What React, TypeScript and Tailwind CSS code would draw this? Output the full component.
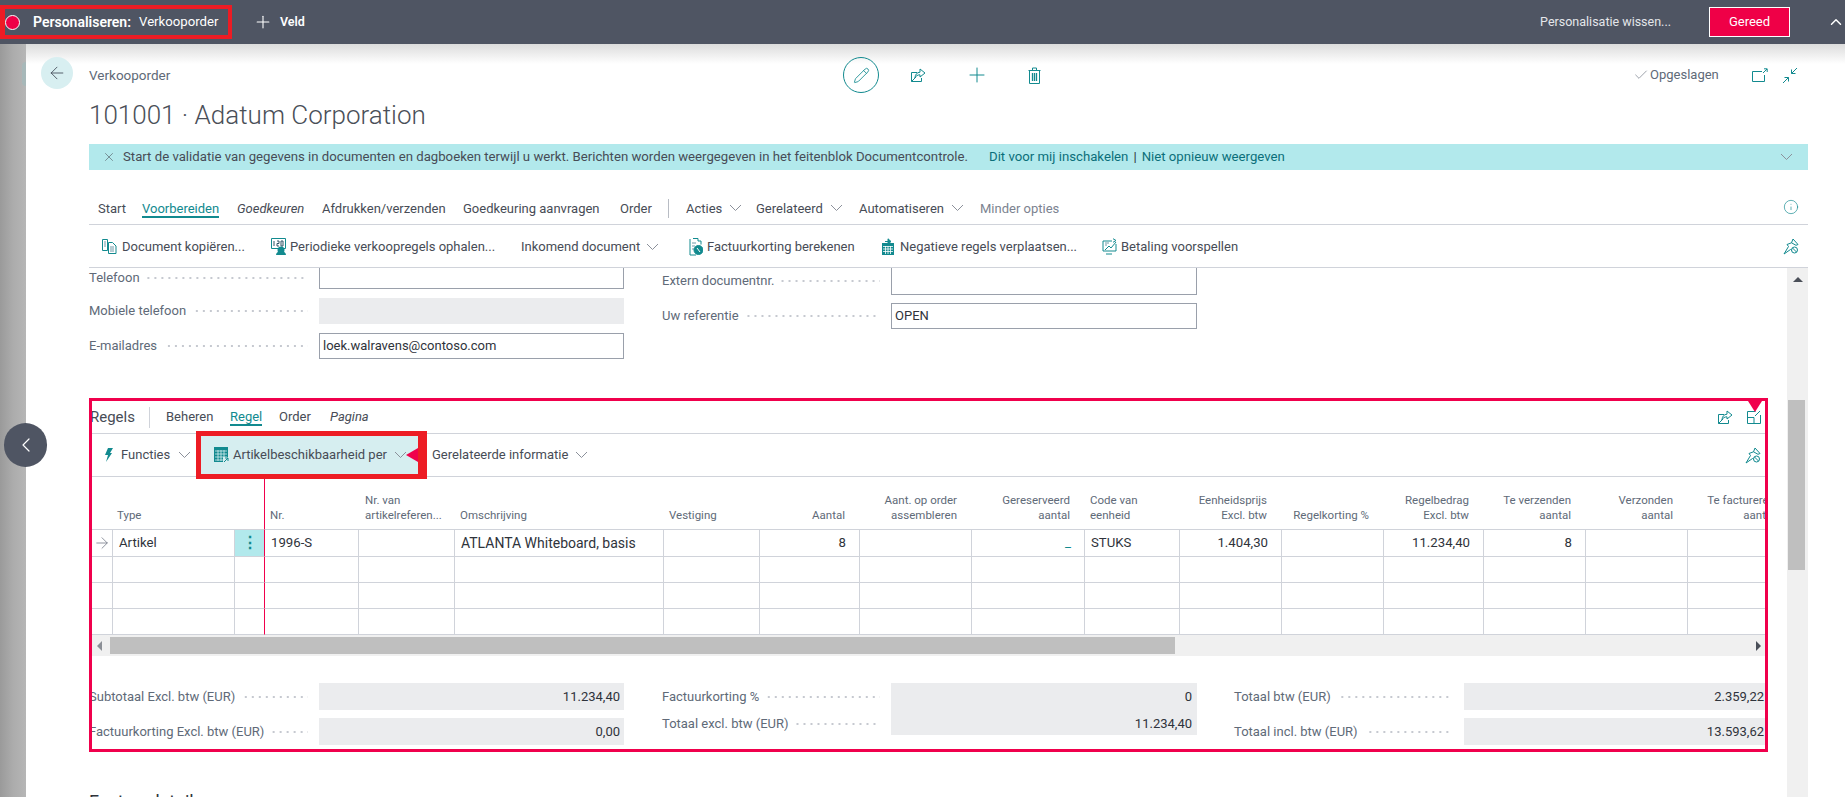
import { ArrowLeft, ArrowRight, Check, ChevronLeft, ChevronUp, Info, Pencil, Plus, X } from 'lucide-react'

const teal = '#128a8f'

function Chev({ className = '' }: { className?: string }) {
  return (
    <svg width="13" height="8" viewBox="0 0 13 8" fill="none" stroke="#8b909a" className={`shrink-0 ${className}`}>
      <path d="M1 1l5.500 5.500L12 1" />
    </svg>
  )
}

function ShareIcon() {
  return (
    <svg width="16" height="15" viewBox="0 0 16 15" fill="none" stroke={teal} className="shrink-0">
      <path d="M7 4.500H1.500v9h10V10M1.500 13.500L6 9" />
      <path d="M10 1l5 4-5 4V6.800C7.500 6.800 5.800 8 5 10c0-3.500 2-5.600 5-5.800z" />
    </svg>
  )
}

function TrashIcon() {
  return (
    <svg width="13" height="17" viewBox="0 0 13 17" fill="none" stroke={teal} className="shrink-0">
      <path d="M1.500 3.500h10v13h-10zM.5 3.500h12M4.500 3V1h4v2" />
      <path d="M4.500 6v8M6.500 6v8M8.500 6v8" strokeWidth="1.300" />
    </svg>
  )
}

function PopOutIcon() {
  return (
    <svg width="16" height="14" viewBox="0 0 16 14" fill="none" stroke={teal} className="shrink-0">
      <path d="M10 3.500H.5v10h12V7M11 5l4-4M12 .8h3.200V4" />
    </svg>
  )
}

function CollapseIcon() {
  return (
    <svg width="16" height="17" viewBox="0 0 16 17" fill="none" stroke={teal} className="shrink-0">
      <path d="M15 1L9.500 6.500M9.500 2.500v4h4M1 16l5.500-5.500M2.500 10.500h4v4" />
    </svg>
  )
}

function PinIcon() {
  return (
    <svg width="16" height="17" viewBox="0 0 16 17" fill="none" stroke={teal} className="shrink-0">
      <path d="M10 1l5 5.500-2 .8L8.500 4.800 10 1zM8.500 4.800L4 6.500l1.500 2L1 16l6.500-4.500 1 1" />
      <circle cx="11.500" cy="12" r="3" />
      <path d="M9.500 10l4 4" />
    </svg>
  )
}

function CopyDocIcon() {
  return (
    <svg width="15" height="15" viewBox="0 0 15 15" fill="none" stroke={teal} className="shrink-0">
      <path d="M.5.500h5v11h-5zM6.500 3.500h4l3.500 3.500v7.500H6.500z" />
      <path d="M2 3h2M2 5h2M2 7h2M8 8h4M8 10h4M8 12h4" stroke="#6f9aa8" />
    </svg>
  )
}

function RecurringIcon() {
  return (
    <svg width="15" height="17" viewBox="0 0 15 17" className="shrink-0">
      <path d="M.5.500h14v10H.5z" fill="#fff" stroke={teal} />
      <path d="M3 3v5M6 3h2v2.500H6V8h2M10 3h2v5h-2z" stroke="#356" fill="none" />
      <circle cx="10" cy="12" r="3.500" fill={teal} />
      <path d="M5 17c0-2.500 2-3.500 5-3.500s5 1 5 3.500z" fill={teal} />
    </svg>
  )
}

function DiscountDocIcon() {
  return (
    <svg width="14" height="18" viewBox="0 0 14 18" fill="none" stroke={teal} className="shrink-0">
      <path d="M4 .5h5V3h3v3.500M1 1v16h6" />
      <path d="M3 5h4M3 8h3M3 11h2" stroke="#6f9aa8" />
      <circle cx="9.500" cy="12" r="4.500" fill={teal} />
      <path d="M8 10l3 4" stroke="#fff" />
    </svg>
  )
}

function CalendarMoveIcon() {
  return (
    <svg width="12" height="17" viewBox="0 0 12 17" className="shrink-0">
      <path d="M0 5h12v12H0z" fill={teal} />
      <path d="M1 8.500h10M1 11h10M1 13.500h10M3.500 8v8M6 8v8M8.500 8v8" stroke="#fff" strokeWidth=".8" />
      <path d="M3 3.500h4M6 .8l3 2.700-3 2.700z" fill={teal} stroke={teal} />
    </svg>
  )
}

function ForecastIcon() {
  return (
    <svg width="15" height="17" viewBox="0 0 15 17" fill="none" stroke={teal} className="shrink-0">
      <path d="M10 3H1v10h13V6" />
      <path d="M3 12L7 8l2 2 5-6M4 16h6M11 .7l3 1.800-3 1.800" />
      <path d="M3 5h4M3 7h2" stroke="#6f9aa8" />
    </svg>
  )
}

function BoltIcon() {
  return (
    <svg width="8" height="14" viewBox="0 0 8 14" className="shrink-0">
      <path d="M3 0h5L5 5h2L1 14l2-7H0z" fill={teal} />
    </svg>
  )
}

function GridIcon() {
  return (
    <svg width="15" height="16" viewBox="0 0 15 16" className="shrink-0">
      <path d="M0 0h14v15H0z" fill={teal} />
      <path d="M1 4h12M1 7h12M1 10h12M1 13h12M4 3v11M7 3v11M10 3v11" stroke="#d6eef0" strokeWidth=".8" />
      <path d="M9 10h6v6H9z" fill="#d6eef0" />
      <path d="M10 15l4-4M11 11h3v3" stroke={teal} fill="none" />
    </svg>
  )
}

function ExpandIcon() {
  return (
    <svg width="14" height="14" viewBox="0 0 14 14" fill="none" stroke={teal} className="shrink-0">
      <path d="M.5 1.500h8M.5 1.500v12h13V5M.5 7.500h6.500v6M8 6l5-5" />
    </svg>
  )
}

function Dots() {
  return <span className="ml-[7px] h-[2px] min-w-0 flex-1 bg-[linear-gradient(to_right,#c6c9d0_2px,transparent_2px)] bg-[length:7px_2px] bg-right bg-repeat-x" />
}

function Label({ text, className = '' }: { text: string; className?: string }) {
  return (
    <div className={`flex shrink-0 items-center pr-[11px] text-[#606a78] ${className}`}>
      <span className="whitespace-nowrap">{text}</span>
      <Dots />
    </div>
  )
}

const widths = [21, 122, 29, 95, 96, 209, 96, 100, 112, 113, 95, 102, 102, 100, 102, 102, 102]

const headers: { text: string[]; right?: boolean; pl?: string }[] = [
  { text: [] },
  { text: ['Type'], pl: 'pl-[4px]' },
  { text: [] },
  { text: ['Nr.'], pl: 'pl-[5px]' },
  { text: ['Nr. van', 'artikelreferen...'], pl: 'pl-[6px]' },
  { text: ['Omschrijving'], pl: 'pl-[5px]' },
  { text: ['Vestiging'], pl: 'pl-[5px]' },
  { text: ['Aantal'], right: true },
  { text: ['Aant. op order', 'assembleren'], right: true },
  { text: ['Gereserveerd', 'aantal'], right: true },
  { text: ['Code van', 'eenheid'], pl: 'pl-[5px]' },
  { text: ['Eenheidsprijs', 'Excl. btw'], right: true },
  { text: ['Regelkorting %'], right: true },
  { text: ['Regelbedrag', 'Excl. btw'], right: true },
  { text: ['Te verzenden', 'aantal'], right: true },
  { text: ['Verzonden', 'aantal'], right: true },
  { text: ['Te factureren', 'aantal'], right: true },
]

const firstRow: Record<number, string> = {
  1: 'Artikel',
  3: '1996-S',
  5: 'ATLANTA Whiteboard, basis',
  7: '8',
  9: '_',
  10: 'STUKS',
  11: '1.404,30',
  13: '11.234,40',
  14: '8',
}

function LinesTable() {
  return (
    <table className="w-[1698px] table-fixed border-separate border-spacing-0">
      <colgroup>
        {widths.map((w, i) => (
          <col key={i} style={{ width: w }} />
        ))}
      </colgroup>
      <thead>
        <tr className="h-[53px]">
          {headers.map((h, i) => (
            <th
              key={i}
              className={`border-b border-[#d0d3da] pb-[6px] align-bottom text-[11.5px] font-normal leading-[15px] text-[#606a78] ${h.right ? 'pr-[15px] text-right' : 'text-left'} ${h.pl ?? ''} ${i === 3 ? 'border-l border-l-[#f0004c]' : ''}`}
            >
              {h.text.map((t) => (
                <div key={t} className="whitespace-nowrap">
                  {t}
                </div>
              ))}
            </th>
          ))}
        </tr>
      </thead>
      <tbody>
        {[0, 1, 2, 3].map((r) => (
          <tr key={r} className={r === 0 ? 'h-[27px]' : 'h-[26px]'}>
            {widths.map((_, c) => {
              const right = headers[c].right
              return (
                <td
                  key={c}
                  className={`overflow-hidden whitespace-nowrap border-b border-r border-[#d0d3da] p-0 text-[#2f333b] ${c === 5 ? 'text-[14px]' : 'text-[13.2px]'} ${right ? 'pr-[13px] text-right' : 'pl-[6px]'} ${c === 2 ? 'border-r-0' : ''} ${c === 3 ? 'border-l border-l-[#f0004c]' : ''} ${c === 2 && r === 0 ? 'bg-[#b2e9ec]' : ''}`}
                >
                  {r === 0 && c === 0 && <ArrowRight size={18} strokeWidth={1} color="#6b7280" className="-ml-[5px]" />}
                  {r === 0 && c === 2 && <div className="-ml-[6px] text-center text-[16px] font-bold leading-[14px] text-[#128a8f]">⋮</div>}
                  {r === 0 && c === 9 ? <span className="text-[#128a8f]">_</span> : r === 0 ? firstRow[c] : null}
                </td>
              )
            })}
          </tr>
        ))}
      </tbody>
    </table>
  )
}

export default function App() {
  return (
    <div className="flex h-[797px] w-[1845px] flex-col overflow-hidden bg-white font-['Roboto',sans-serif] text-[13px] text-[#474c56]">
      <header className="flex h-[44px] shrink-0 items-center bg-[#4f5563] text-white">
        <div className="flex h-[34px] w-[232px] shrink-0 items-center overflow-hidden border-[4px] border-l-[5px] border-[#ed1c24]">
          <span className="h-[15px] w-[15px] shrink-0 rounded-full border border-white bg-[#ef0047]" />
          <span className="ml-[13px] whitespace-nowrap text-[14px] font-semibold">Personaliseren:</span>
          <span className="ml-[8px] whitespace-nowrap text-[13.2px]">Verkooporder</span>
        </div>
        <Plus size={20} strokeWidth={1.3} className="ml-[21px]" />
        <span className="ml-[7px] text-[12.5px] font-semibold">Veld</span>
        <span className="ml-auto text-[12.5px] text-[#e4e6ea]">Personalisatie wissen...</span>
        <button className="ml-[38px] h-[30px] w-[81px] border border-white bg-[#ef0047] text-[13px]">Gereed</button>
        <ChevronUp size={18} strokeWidth={2} className="ml-[37px]" />
      </header>

      <div className="flex min-h-0 flex-1">
        <div className="relative w-[26px] shrink-0 bg-linear-to-r from-[#9a9a9a] via-[#acacac] to-[#b6b6b6]">
          <span className="absolute left-[22px] top-[18px] h-[24px] w-[4px] rounded-l-full bg-[#a7b8b9]" />
          <button className="absolute left-[4px] top-[379px] z-20 flex h-[44px] w-[43px] items-center justify-center rounded-full bg-[#4f5563]">
            <ChevronLeft size={24} strokeWidth={1.2} color="#fff" />
          </button>
        </div>

        <main className="relative flex min-w-0 flex-1 flex-col pl-[63px] pr-[37px]">
          <div className="pointer-events-none absolute left-0 right-0 top-0 h-[20px] bg-linear-to-b from-[#dcdcdc] to-white" />

          <section className="relative h-[100px] shrink-0 pt-[13px]">
            <div className="flex h-[36px] items-center">
              <button className="-ml-[48px] mb-[4px] flex h-[32px] w-[32px] shrink-0 items-center justify-center rounded-full bg-[#d8eff1]">
                <ArrowLeft size={20} strokeWidth={1} color="#3c4452" />
              </button>
              <span className="ml-[16px] w-[754px] shrink-0 text-[13.5px] text-[#606a78]">Verkooporder</span>
              <span className="flex h-[36px] w-[36px] shrink-0 items-center justify-center rounded-full border border-[#128a8f]">
                <Pencil size={17} strokeWidth={1.2} color={teal} />
              </span>
              <span className="ml-[31px] shrink-0">
                <ShareIcon />
              </span>
              <Plus size={24} strokeWidth={1} color={teal} className="ml-[39px] shrink-0" />
              <span className="ml-[39px] shrink-0">
                <TrashIcon />
              </span>
              <Check size={16} strokeWidth={1} color="#6b7280" className="ml-[592px] shrink-0" />
              <span className="ml-[1px] w-[102px] shrink-0 whitespace-nowrap text-[#606a78]">Opgeslagen</span>
              <PopOutIcon />
              <span className="ml-[14px] shrink-0">
                <CollapseIcon />
              </span>
            </div>
            <h1 className="mt-[2px] whitespace-nowrap text-[26px] font-light leading-[40px] text-[#4a4f58]">101001 · Adatum Corporation</h1>
          </section>

          <div className="flex h-[26px] shrink-0 items-center bg-[#b2e9ec] pl-[13px] pr-[15px] text-[13.2px]">
            <X size={14} strokeWidth={1} color="#4a4f58" />
            <span className="ml-[7px] w-[866px] shrink-0 whitespace-nowrap">Start de validatie van gegevens in documenten en dagboeken terwijl u werkt. Berichten worden weergegeven in het feitenblok Documentcontrole.</span>
            <span className="whitespace-nowrap text-[#0b6f7a]">Dit voor mij inschakelen</span>
            <span className="mx-[5px] text-[#2f333b]">|</span>
            <span className="whitespace-nowrap text-[#0b6f7a]">Niet opnieuw weergeven</span>
            <span className="ml-auto">
              <Chev />
            </span>
          </div>

          <nav className="flex h-[55px] shrink-0 items-end whitespace-nowrap border-b border-[#d0d3da] pb-[6px] pl-[9px] pr-[9px]">
            <span className="w-[44px] shrink-0">Start</span>
            <span className="w-[95px] shrink-0">
              <span className="border-b-2 border-[#128a8f] text-[#128a8f]">Voorbereiden</span>
            </span>
            <span className="w-[85px] shrink-0 italic">Goedkeuren</span>
            <span className="w-[141px] shrink-0">Afdrukken/verzenden</span>
            <span className="w-[157px] shrink-0">Goedkeuring aanvragen</span>
            <span className="w-[49px] shrink-0 border-r border-[#b8bcc4]">Order</span>
            <span className="ml-[17px] flex w-[70px] shrink-0 items-center gap-[7px]">
              Acties <Chev />
            </span>
            <span className="flex w-[103px] shrink-0 items-center gap-[7px]">
              Gerelateerd <Chev />
            </span>
            <span className="flex w-[121px] shrink-0 items-center gap-[7px]">
              Automatiseren <Chev />
            </span>
            <span className="text-[#7c8390]">Minder opties</span>
            <Info size={16} strokeWidth={1} color={teal} className="mb-[3px] ml-auto" />
          </nav>

          <div className="flex h-[43px] shrink-0 items-center whitespace-nowrap border-b border-[#d0d3da] pl-[13px] pr-[9px] pt-[1px]">
            <span className="flex w-[169px] shrink-0 items-center gap-[5px]">
              <CopyDocIcon /> Document kopiëren...
            </span>
            <span className="flex w-[250px] shrink-0 items-center gap-[4px]">
              <RecurringIcon /> Periodieke verkoopregels ophalen...
            </span>
            <span className="flex w-[168px] shrink-0 items-center gap-[6px]">
              Inkomend document <Chev />
            </span>
            <span className="flex w-[193px] shrink-0 items-center gap-[4px]">
              <DiscountDocIcon /> Factuurkorting berekenen
            </span>
            <span className="flex w-[220px] shrink-0 items-center gap-[6px]">
              <CalendarMoveIcon /> Negatieve regels verplaatsen...
            </span>
            <span className="flex shrink-0 items-center gap-[4px]">
              <ForecastIcon /> Betaling voorspellen
            </span>
            <span className="ml-auto">
              <PinIcon />
            </span>
          </div>

          <div className="flex min-h-0 flex-1">
            <div className="w-[1698px] shrink-0">
              <div className="flex h-[130px]">
                <div className="w-[535px] shrink-0">
                  <div className="flex h-[19px] items-center">
                    <Label text="Telefoon" className="w-[230px]" />
                    <div className="h-[21px] flex-1 self-start border-x border-b border-[#9aa0ab]" />
                  </div>
                  <div className="mt-[11px] flex h-[26px] items-center">
                    <Label text="Mobiele telefoon" className="w-[230px]" />
                    <div className="h-[26px] flex-1 bg-[#ebecee]" />
                  </div>
                  <div className="mt-[9px] flex h-[26px] items-center">
                    <Label text="E-mailadres" className="w-[230px]" />
                    <div className="flex h-[26px] flex-1 items-center border border-[#9aa0ab] pl-[3px] text-[#2f333b]">loek.walravens@contoso.com</div>
                  </div>
                </div>
                <div className="ml-[38px] w-[535px] shrink-0">
                  <div className="flex h-[25px] items-center">
                    <Label text="Extern documentnr." className="w-[229px]" />
                    <div className="h-[27px] flex-1 self-start border-x border-b border-[#9aa0ab]" />
                  </div>
                  <div className="mt-[10px] flex h-[26px] items-center">
                    <Label text="Uw referentie" className="w-[229px]" />
                    <div className="flex h-[26px] flex-1 items-center border border-[#9aa0ab] pl-[3px] text-[#2f333b]">OPEN</div>
                  </div>
                </div>
              </div>

              <section className="relative h-[354px] w-[1679px] border-[3px] border-[#f0004c]">
                <div className="h-full w-full overflow-hidden">
                  <div className="flex h-[33px] items-center border-b border-[#d0d3da]">
                    <span className="-ml-[2px] w-[60px] shrink-0 border-r border-[#d0d3da] text-[15px] leading-[21px]">Regels</span>
                    <span className="ml-[16px] w-[64px] shrink-0">Beheren</span>
                    <span className="w-[49px] shrink-0">
                      <span className="border-b-2 border-[#128a8f] text-[#128a8f]">Regel</span>
                    </span>
                    <span className="w-[51px] shrink-0">Order</span>
                    <span className="italic">Pagina</span>
                    <span className="ml-auto">
                      <ShareIcon />
                    </span>
                    <span className="ml-[14px] mr-[4px]">
                      <ExpandIcon />
                    </span>
                  </div>

                  <div className="flex h-[43px] items-center whitespace-nowrap border-b border-[#d0d3da]">
                    <span className="ml-[13px] flex w-[91px] shrink-0 items-center">
                      <BoltIcon />
                      <span className="ml-[8px]">Functies</span>
                      <Chev className="ml-[8px]" />
                    </span>
                    <div className="relative z-10 flex h-[48px] w-[231px] shrink-0 items-center border-[5px] border-r-[9px] border-[#ed1c24] bg-[#d6eef0] pl-[13px]">
                      <GridIcon />
                      <span className="ml-[4px]">Artikelbeschikbaarheid per</span>
                      <Chev className="ml-[7px]" />
                      <span className="absolute right-0 h-0 w-0 border-y-[7px] border-r-[12px] border-y-transparent border-r-[#f0004c]" />
                    </div>
                    <span className="ml-[5px] flex items-center gap-[7px]">
                      Gerelateerde informatie <Chev />
                    </span>
                    <span className="ml-auto mr-[4px]">
                      <PinIcon />
                    </span>
                  </div>

                  <LinesTable />

                  <div className="flex h-[21px] w-full items-center bg-[#f0f0f0]">
                    <span className="ml-[5px] h-0 w-0 border-y-[5px] border-r-[5px] border-y-transparent border-r-[#8b8f96]" />
                    <span className="ml-[8px] h-[17px] w-[1065px] bg-[#bfbfbf]" />
                    <span className="ml-auto mr-[4px] h-0 w-0 border-y-[5px] border-l-[5px] border-y-transparent border-l-[#4a4f58]" />
                  </div>

                  <div className="-ml-[3px] mt-[27px] flex">
                    <div className="w-[535px] shrink-0">
                      <div className="flex h-[27px] items-center">
                        <Label text="Subtotaal Excl. btw (EUR)" className="w-[230px]" />
                        <div className="flex h-[27px] flex-1 items-center justify-end bg-[#ebecee] pr-[4px] text-[#2f333b]">11.234,40</div>
                      </div>
                      <div className="mt-[8px] flex h-[27px] items-center">
                        <Label text="Factuurkorting Excl. btw (EUR)" className="w-[230px]" />
                        <div className="flex h-[27px] flex-1 items-center justify-end bg-[#ebecee] pr-[4px] text-[#2f333b]">0,00</div>
                      </div>
                    </div>
                    <div className="ml-[38px] flex w-[535px] shrink-0">
                      <div className="w-[229px] shrink-0">
                        <Label text="Factuurkorting %" className="h-[27px] w-full" />
                        <Label text="Totaal excl. btw (EUR)" className="h-[27px] w-full" />
                      </div>
                      <div className="h-[52px] flex-1 bg-[#ebecee] pr-[5px] text-right leading-[27px] text-[#2f333b]">
                        <div>0</div>
                        <div>11.234,40</div>
                      </div>
                    </div>
                    <div className="ml-[37px] w-[534px] shrink-0">
                      <div className="flex h-[27px] items-center">
                        <Label text="Totaal btw (EUR)" className="w-[230px]" />
                        <div className="flex h-[27px] flex-1 items-center justify-end bg-[#ebecee] pr-[4px] text-[#2f333b]">2.359,22</div>
                      </div>
                      <div className="mt-[8px] flex h-[27px] items-center">
                        <Label text="Totaal incl. btw (EUR)" className="w-[230px]" />
                        <div className="flex h-[27px] flex-1 items-center justify-end bg-[#ebecee] pr-[4px] text-[#2f333b]">13.593,62</div>
                      </div>
                    </div>
                  </div>
                </div>
                <span className="absolute right-[3px] top-0 h-0 w-0 border-x-[7px] border-t-[11px] border-x-transparent border-t-[#f0004c]" />
              </section>

              <h2 className="mt-[38px] text-[18px] leading-[24px] text-[#2f333b]">Factuurdetails</h2>
            </div>

            <div className="flex w-[21px] shrink-0 flex-col items-center bg-[#f0f0f0]">
              <span className="mt-[9px] h-0 w-0 border-x-[5px] border-b-[5px] border-x-transparent border-b-[#4a4f58]" />
              <span className="ml-[-3px] mt-[118px] h-[170px] w-[17px] bg-[#bfbfbf]" />
            </div>
          </div>
        </main>
      </div>
    </div>
  )
}
